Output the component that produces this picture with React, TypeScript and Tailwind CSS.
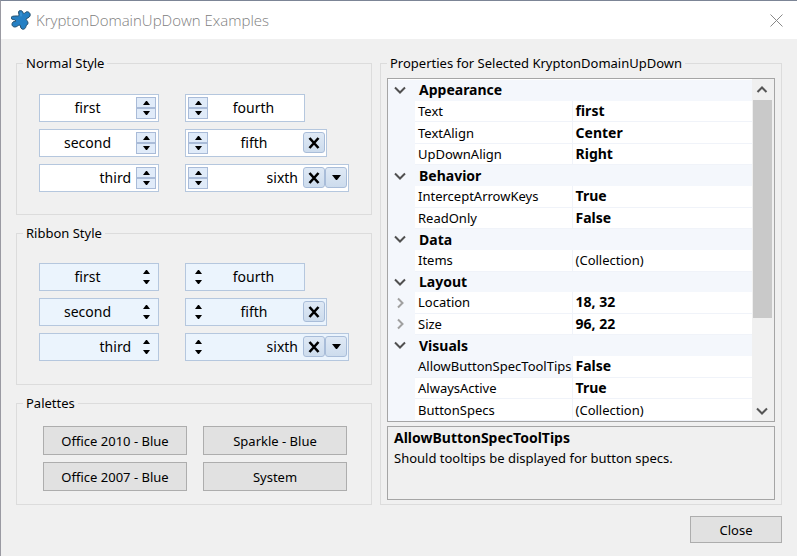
import React from "react";

type Align = "left" | "center" | "right";
type Spec = "clear" | "drop";

function Triangle({ down = false }: { down?: boolean }) {
  return (
    <svg viewBox="0 0 7 4" className="h-1 w-[7px]" aria-hidden="true">
      <path d={down ? "M0 0H7L4 4H3Z" : "M3 0H4L7 4H0Z"} fill="#000" />
    </svg>
  );
}

function Spinner({ ribbon, label }: { ribbon: boolean; label: string }) {
  const tone = ribbon ? "border-transparent" : "border-[#a9bbd8] bg-[#e0ebf9]";
  return (
    <div className="flex shrink-0 flex-col">
      <button
        type="button"
        aria-label={`${label} previous`}
        className={`flex h-[11px] w-5 items-end justify-center border pb-0.5 ${tone}`}
      >
        <Triangle />
      </button>
      <button
        type="button"
        aria-label={`${label} next`}
        className={`flex h-[11px] w-5 items-start justify-center border pt-0.5 ${tone}`}
      >
        <Triangle down />
      </button>
    </div>
  );
}

function SpecButton({ kind, label }: { kind: Spec; label: string }) {
  return (
    <button
      type="button"
      aria-label={`${label} ${kind}`}
      className="mt-0.5 flex h-[21px] w-[22px] shrink-0 items-center justify-center self-start rounded-[3px] border border-[#a9bdd9] bg-linear-to-b from-[#dfe9f5] to-[#cddced]"
    >
      {kind === "clear" ? (
        <svg viewBox="0 0 12 12" className="size-3" aria-hidden="true">
          <path d="M1.5 1L10.5 11M10.5 1L1.5 11" stroke="#000" strokeWidth="2.6" />
        </svg>
      ) : (
        <svg viewBox="0 0 9 5" className="h-[5px] w-[9px]" aria-hidden="true">
          <path d="M0 0H9L5 5H4Z" fill="#000" />
        </svg>
      )}
    </button>
  );
}

interface UpDownProps {
  value: string;
  align: Align;
  side: "left" | "right";
  specs?: Spec[];
  ribbon: boolean;
}

const alignClass: Record<Align, string> = {
  left: "text-left",
  center: "text-center",
  right: "text-right",
};

function DomainUpDown({ value, align, side, specs = [], ribbon }: UpDownProps) {
  const width =
    specs.length === 2 ? "w-[164px] pr-px" : specs.length === 1 ? "w-[142px] pr-px" : "w-[120px] pr-0.5";
  const tone = ribbon ? "bg-[#ebf4fd]" : "bg-white";
  return (
    <div className={`flex h-7 items-center border border-[#b5c7de] pl-0.5 ${width} ${tone}`}>
      {side === "left" && <Spinner ribbon={ribbon} label={value} />}
      <input
        aria-label={`${ribbon ? "Ribbon" : "Normal"} ${value}`}
        defaultValue={value}
        className={`min-w-0 flex-1 bg-transparent pl-0.5 pr-[5px] text-sm outline-none ${alignClass[align]}`}
      />
      {specs.map((s) => (
        <SpecButton key={s} kind={s} label={value} />
      ))}
      {side === "right" && <Spinner ribbon={ribbon} label={value} />}
    </div>
  );
}

function Group({ title, className = "", children }: { title: string; className?: string; children: React.ReactNode }) {
  return (
    <fieldset className="min-w-0 border border-[#dcdcdc]">
      <legend className="ml-1.5 px-[3px] leading-5">{title}</legend>
      <div className={className}>{children}</div>
    </fieldset>
  );
}

function UpDownGroup({ title, ribbon = false }: { title: string; ribbon?: boolean }) {
  return (
    <Group title={title} className={`pl-[22px] ${ribbon ? "pb-[23px] pt-5" : "pb-[22px] pt-[21px]"}`}>
      <div className="flex gap-[26px]">
        <div className="flex flex-col gap-[7px]">
          <DomainUpDown ribbon={ribbon} value="first" align="center" side="right" />
          <DomainUpDown ribbon={ribbon} value="second" align="center" side="right" />
          <DomainUpDown ribbon={ribbon} value="third" align="right" side="right" />
        </div>
        <div className="flex flex-col gap-[7px]">
          <DomainUpDown ribbon={ribbon} value="fourth" align="center" side="left" />
          <DomainUpDown ribbon={ribbon} value="fifth" align="center" side="left" specs={["clear"]} />
          <DomainUpDown ribbon={ribbon} value="sixth" align="right" side="left" specs={["clear", "drop"]} />
        </div>
      </div>
    </Group>
  );
}

function PushButton({ children, className = "" }: { children: string; className?: string }) {
  return (
    <button type="button" className={`border border-[#adadad] bg-[#e1e1e1] text-center leading-5 ${className}`}>
      {children}
    </button>
  );
}

interface Row {
  name: string;
  value?: string;
  bold?: boolean;
  nested?: boolean;
  selected?: boolean;
}

const rows: Row[] = [
  { name: "Appearance" },
  { name: "Text", value: "first", bold: true },
  { name: "TextAlign", value: "Center", bold: true },
  { name: "UpDownAlign", value: "Right", bold: true },
  { name: "Behavior" },
  { name: "InterceptArrowKeys", value: "True", bold: true },
  { name: "ReadOnly", value: "False", bold: true },
  { name: "Data" },
  { name: "Items", value: "(Collection)" },
  { name: "Layout" },
  { name: "Location", value: "18, 32", bold: true, nested: true },
  { name: "Size", value: "96, 22", bold: true, nested: true },
  { name: "Visuals" },
  { name: "AllowButtonSpecToolTips", value: "False", bold: true, selected: true },
  { name: "AlwaysActive", value: "True", bold: true },
  { name: "ButtonSpecs", value: "(Collection)" },
];

function Chevron({ dir, className }: { dir: "up" | "down" | "right"; className: string }) {
  const d = { up: "M1.5 8L6 3.5L10.5 8", down: "M1 3.5L6 8.5L11 3.5", right: "M4 1.5L8.5 6L4 10.5" }[dir];
  return (
    <svg viewBox="0 0 12 12" className={`size-3 ${className}`} fill="none" stroke="currentColor" aria-hidden="true">
      <path d={d} strokeWidth="2" />
    </svg>
  );
}

function PropertyGrid() {
  return (
    <div className="flex border border-[#a5a5a5] bg-white">
      <table className="mt-px h-[341px] min-w-0 flex-1 table-fixed border-collapse bg-[#f4f7fc] leading-5">
        <colgroup>
          <col className="w-[27px]" />
          <col className="w-[155px]" />
          <col />
        </colgroup>
        <tbody>
          {rows.map((r) =>
            r.value === undefined ? (
              <tr key={r.name}>
                <td className="p-0">
                  <button type="button" aria-label={`Collapse ${r.name}`} className="ml-1.5 flex">
                    <Chevron dir="down" className="text-[#505050]" />
                  </button>
                </td>
                <th colSpan={2} scope="rowgroup" className="p-0 pl-1 text-left text-sm/5 font-bold">
                  {r.name}
                </th>
              </tr>
            ) : (
              <tr key={r.name}>
                <td className="p-0">
                  {r.nested && (
                    <button type="button" aria-label={`Expand ${r.name}`} className="ml-1.5 flex">
                      <Chevron dir="right" className="text-[#a0a0a0]" />
                    </button>
                  )}
                </td>
                <th
                  scope="row"
                  className={`whitespace-nowrap border-b border-r border-[#f0f3f9] p-0 pl-[3px] text-left font-normal ${r.selected ? "" : "bg-white"}`}
                >
                  {r.name}
                </th>
                <td
                  className={`border-b border-[#f0f3f9] bg-white p-0 pl-[3px] ${r.bold ? "text-sm/5 font-bold" : ""}`}
                >
                  {r.value}
                </td>
              </tr>
            )
          )}
        </tbody>
      </table>
      <div className="flex w-[22px] flex-col bg-[#f0f0f0] pr-0.5">
        <button type="button" aria-label="Scroll up" className="flex h-[21px] items-center justify-center">
          <Chevron dir="up" className="text-[#555]" />
        </button>
        <div className="flex-1">
          <div className="ml-px h-[218px] bg-[#c9c9c9]" />
        </div>
        <button type="button" aria-label="Scroll down" className="flex h-[21px] items-center justify-center">
          <Chevron dir="down" className="text-[#555]" />
        </button>
      </div>
    </div>
  );
}

function Logo() {
  return (
    <svg viewBox="0 0 20 20" className="size-5" aria-hidden="true">
      <path
        d="M8 1C10 0 12 1 12 3C13 4 14 3 15 2C17 1 20 3 19 6C18 8 16 8 15 9C15 10 17 11 17 13C17 15 15 15 15 16C15 18 13 20 11 19C9 18 10 16 9 15C7 15 6 17 4 17C1 17 0 14 2 12C3 11 5 12 5 11C4 9 0 10 0 8C0 6 3 6 5 6C7 6 8 6 8 5C8 4 7 2 8 1Z"
        fill="#2580c4"
        stroke="#24506f"
        strokeWidth="1"
      />
      <path d="M10 3L10 6" stroke="#4ba0dc" strokeWidth="1" strokeLinecap="round" />
    </svg>
  );
}

export default function App() {
  return (
    <div className="flex min-h-screen flex-col border-l border-t border-l-[#9a9aa2] border-t-[#7c8596] bg-[#f0f0f0] font-['Noto_Sans',sans-serif] text-[13px] text-black">
      <header className="flex h-[38px] items-center bg-white pl-2.5 pr-3.5">
        <Logo />
        <h1 className="ml-[5px] flex-1 font-['Open_Sans',sans-serif] text-[15px] font-light text-[#808080]">
          KryptonDomainUpDown Examples
        </h1>
        <button type="button" aria-label="Close window">
          <svg viewBox="0 0 13 13" className="size-[13px]" stroke="#888" fill="none" aria-hidden="true">
            <path d="M.5 .5L12.5 12.5M12.5 .5L.5 12.5" />
          </svg>
        </button>
      </header>
      <main className="grid grid-cols-[356fr_402fr] gap-x-2 px-[15px] pt-3.5">
        <div className="flex min-w-0 flex-col gap-2">
          <UpDownGroup title="Normal Style" />
          <UpDownGroup title="Ribbon Style" ribbon />
          <Group title="Palettes" className="pb-[13px] pl-[26px] pr-6 pt-[13px]">
            <div className="grid grid-cols-2 gap-x-4 gap-y-[7px]">
              <PushButton className="h-[29px]">Office 2010 - Blue</PushButton>
              <PushButton className="h-[29px]">Sparkle - Blue</PushButton>
              <PushButton className="h-[29px]">Office 2007 - Blue</PushButton>
              <PushButton className="h-[29px]">System</PushButton>
            </div>
          </Group>
        </div>
        <Group title="Properties for Selected KryptonDomainUpDown" className="px-1.5 pt-[5px]">
          <PropertyGrid />
          <div className="mt-1 h-[74px] border border-[#a5a5a5] px-1.5 pt-px leading-5">
            <p className="text-sm/5 font-bold">AllowButtonSpecToolTips</p>
            <p>Should tooltips be displayed for button specs.</p>
          </div>
        </Group>
      </main>
      <footer className="flex justify-end px-[15px] pt-[11px]">
        <PushButton className="h-[27px] w-[92px]">Close</PushButton>
      </footer>
    </div>
  );
}
